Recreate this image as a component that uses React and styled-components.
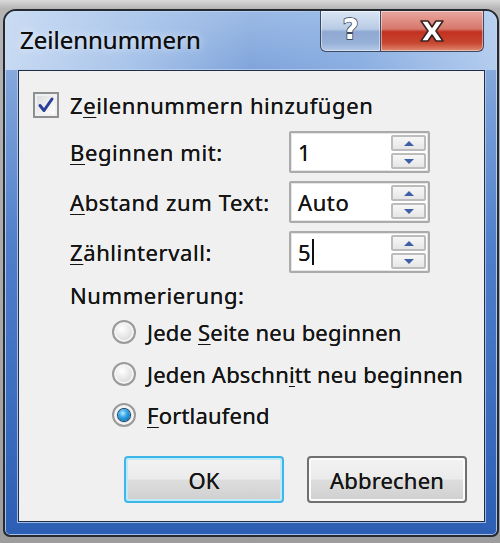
import React from "react";
import styled, { createGlobalStyle } from "styled-components";

const GlobalStyle = createGlobalStyle`
  html, body {
    margin: 0;
    padding: 0;
  }
  body {
    width: 500px;
    height: 543px;
    overflow: hidden;
    background: linear-gradient(#d9d9d9, #b4b4b4 9px, #a9a9a9 60%, #9d9d9d);
    font-family: "Noto Sans", "Open Sans", sans-serif;
    color: #151515;
  }
`;

const Window = styled.div`
  margin: 9px 1px 0 3px;
  width: 496px;
  height: 528px;
  box-sizing: border-box;
  border: 2px solid #252a31;
  border-radius: 13px 13px 7px 7px;
  background: linear-gradient(#a9c4e9 0%, #80a4da 14%, #4f7fcb 45%, #2c5eb4 100%);
  box-shadow: inset 0 0 0 1px rgba(205, 224, 250, 0.75);
  display: flex;
  flex-direction: column;
  overflow: hidden;
`;

const TitleBar = styled.div`
  height: 59px;
  flex: none;
  display: flex;
  justify-content: space-between;
  align-items: center;
  padding-left: 15px;
  background: linear-gradient(
    to right,
    rgba(205, 222, 244, 0.92) 0%,
    rgba(180, 205, 238, 0.75) 25%,
    rgba(80, 130, 205, 0.15) 50%,
    rgba(140, 178, 230, 0.5) 72%,
    rgba(190, 212, 242, 0.8) 100%
  );
`;

const Title = styled.div`
  font-size: 24px;
  color: #0d0d0d;
  text-shadow: 0 0 8px rgba(255, 255, 255, 0.85), 0 0 0.4px #0d0d0d;
  margin-top: -3px;
`;

const Captions = styled.div`
  align-self: flex-start;
  display: flex;
  margin-right: 13px;
`;

const CaptionButton = styled.div`
  width: ${(p) => p.$w}px;
  height: 41px;
  box-sizing: border-box;
  border: 1px solid #3b4a63;
  border-top: none;
  border-radius: ${(p) => (p.$close ? "0 0 6px 0" : "0 0 0 6px")};
  ${(p) => (p.$close ? "border-left: none;" : "")}
  display: flex;
  align-items: center;
  justify-content: center;
  box-shadow: inset 0 0 0 1px rgba(255, 255, 255, 0.45);
  background: ${(p) =>
    p.$close
      ? "linear-gradient(#e9a89f 0%, #d7776b 45%, #c2311f 52%, #c84630 80%, #e08a70 100%)"
      : "linear-gradient(#dbe6f4 0%, #b8cbe6 45%, #8fa9d2 52%, #96b0d8 80%, #b7cbe8 100%)"};
`;

const Question = styled.span`
  font-family: "DejaVu Sans", sans-serif;
  font-weight: bold;
  font-size: 28px;
  color: #fff;
  line-height: 1;
  -webkit-text-stroke: 1.4px #2b3446;
  paint-order: stroke fill;
  margin-top: -3px;
`;

const Client = styled.div`
  flex: 1;
  margin: 0 12px 13px 13px;
  border: 1px solid #1f2d47;
  background: #f0f0f0;
  box-shadow: 0 0 0 1px rgba(185, 208, 240, 0.8);
  padding: 21px 17px 0 14px;
  display: flex;
  flex-direction: column;
  font-size: 22px;
  letter-spacing: 0.6px;
  white-space: nowrap;
  text-shadow: 0 0 0.5px #151515;
`;

const CheckRow = styled.label`
  display: flex;
  align-items: center;
  gap: 11px;
  height: 26px;
`;

const CheckBox = styled.span`
  width: 26px;
  height: 26px;
  box-sizing: border-box;
  border: 2px solid #8e8f8f;
  background: linear-gradient(135deg, #d8d8d8, #f3f3f3 60%, #ffffff);
  box-shadow: inset 0 0 0 2px #eef0f3;
  display: flex;
  align-items: center;
  justify-content: center;
`;

const Fields = styled.div`
  margin: 13px 0 0 37px;
  display: grid;
  grid-template-columns: 219px 141px;
  row-gap: 8px;
  align-items: center;
`;

const Label = styled.span`
  white-space: nowrap;
`;

const Key = styled.span`
  text-decoration: underline;
  text-underline-offset: 3px;
  text-decoration-thickness: 1px;
`;

const SpinBox = styled.div`
  height: 42px;
  box-sizing: border-box;
  border: 2px solid #ababab;
  border-radius: 2px;
  background: #fff;
  box-shadow: inset 0 0 0 1px #e6e6e6;
  display: flex;
  align-items: center;
  padding: 2px 2px 2px 7px;
`;

const SpinText = styled.span`
  flex: 1;
  display: flex;
  align-items: center;
`;

const Caret = styled.span`
  width: 2px;
  height: 26px;
  background: #111;
  margin-left: 1px;
`;

const Spinner = styled.div`
  width: 35px;
  align-self: stretch;
  display: flex;
  flex-direction: column;
  gap: 2px;
`;

const SpinButton = styled.div`
  flex: 1;
  border: 2px solid #bcbcbc;
  border-radius: 2px;
  background: linear-gradient(#f7f7f7, #e6e6e6);
  display: flex;
  align-items: center;
  justify-content: center;
`;

const Arrow = styled.span`
  width: 0;
  height: 0;
  border-left: 5px solid transparent;
  border-right: 5px solid transparent;
  ${(p) =>
    p.$down
      ? "border-top: 5px solid #3d5fa6;"
      : "border-bottom: 5px solid #3d5fa6;"}
`;

const GroupLabel = styled.div`
  margin: 8px 0 0 37px;
  height: 28px;
  line-height: 28px;
`;

const Radios = styled.div`
  margin: 9px 0 0 79px;
  display: flex;
  flex-direction: column;
  gap: 13.5px;
  letter-spacing: 0.2px;
`;

const RadioRow = styled.label`
  display: flex;
  align-items: center;
  gap: 11px;
  height: 28px;
`;

const RadioDot = styled.span`
  flex: none;
  width: 24px;
  height: 24px;
  box-sizing: border-box;
  border-radius: 50%;
  border: 2px solid #9a9a9a;
  background: radial-gradient(circle at 40% 35%, #ffffff 0%, #e8e8e8 45%, #c9c9c9 100%);
  box-shadow: inset 0 0 0 2px #f4f4f4;
  display: flex;
  align-items: center;
  justify-content: center;

  &::after {
    content: "";
    display: ${(p) => (p.$on ? "block" : "none")};
    width: 12px;
    height: 12px;
    border-radius: 50%;
    background: radial-gradient(circle at 40% 35%, #b7ecff 0%, #2ea4e6 40%, #0b5a9c 100%);
    box-shadow: 0 0 0 1px #0d3e6c;
  }
`;

const Buttons = styled.div`
  margin-top: 27px;
  display: flex;
  justify-content: flex-end;
  gap: 23px;
`;

const Button = styled.div`
  width: 160px;
  height: 47px;
  box-sizing: border-box;
  border-radius: 4px;
  border: 2px solid ${(p) => (p.$default ? "#3fb6e8" : "#707070")};
  box-shadow: inset 0 0 0 2px ${(p) => (p.$default ? "#bfeafa" : "#fbfbfb")};
  background: linear-gradient(#f3f3f3 0%, #ebebeb 48%, #dddddd 52%, #cfcfcf 100%);
  display: flex;
  align-items: center;
  justify-content: center;
  letter-spacing: 0.2px;
`;

function Spin({ value, caret }) {
  return (
    <SpinBox>
      <SpinText>
        {value}
        {caret && <Caret />}
      </SpinText>
      <Spinner>
        <SpinButton>
          <Arrow />
        </SpinButton>
        <SpinButton>
          <Arrow $down />
        </SpinButton>
      </Spinner>
    </SpinBox>
  );
}

export default function App() {
  return (
    <>
      <GlobalStyle />
      <Window>
        <TitleBar>
          <Title>Zeilennummern</Title>
          <Captions>
            <CaptionButton $w={61}>
              <Question>?</Question>
            </CaptionButton>
            <CaptionButton $w={103} $close>
              <svg width="34" height="26" viewBox="0 0 34 26">
                <path
                  d="M6 3 L13 3 L17 9 L21 3 L28 3 L21 13 L28 23 L21 23 L17 17 L13 23 L6 23 L13 13 Z"
                  fill="#ffffff"
                  stroke="#3a2320"
                  strokeWidth="1.6"
                  strokeLinejoin="round"
                />
              </svg>
            </CaptionButton>
          </Captions>
        </TitleBar>
        <Client>
          <CheckRow>
            <CheckBox>
              <svg width="18" height="18" viewBox="0 0 18 18">
                <path
                  d="M3 9.5 L7 14.5 L15 3"
                  fill="none"
                  stroke="#2a3f98"
                  strokeWidth="3"
                  strokeLinecap="round"
                  strokeLinejoin="round"
                />
              </svg>
            </CheckBox>
            <span>
              Z<Key>e</Key>ilennummern hinzufügen
            </span>
          </CheckRow>
          <Fields>
            <Label>
              <Key>B</Key>eginnen mit:
            </Label>
            <Spin value="1" />
            <Label>
              <Key>A</Key>bstand zum Text:
            </Label>
            <Spin value="Auto" />
            <Label>
              <Key>Z</Key>ählintervall:
            </Label>
            <Spin value="5" caret />
          </Fields>
          <GroupLabel>Nummerierung:</GroupLabel>
          <Radios>
            <RadioRow>
              <RadioDot />
              <span>
                Jede <Key>S</Key>eite neu beginnen
              </span>
            </RadioRow>
            <RadioRow>
              <RadioDot />
              <span>
                Jeden Abschn<Key>i</Key>tt neu beginnen
              </span>
            </RadioRow>
            <RadioRow>
              <RadioDot $on />
              <span>
                <Key>F</Key>ortlaufend
              </span>
            </RadioRow>
          </Radios>
          <Buttons>
            <Button $default>OK</Button>
            <Button>Abbrechen</Button>
          </Buttons>
        </Client>
      </Window>
    </>
  );
}
